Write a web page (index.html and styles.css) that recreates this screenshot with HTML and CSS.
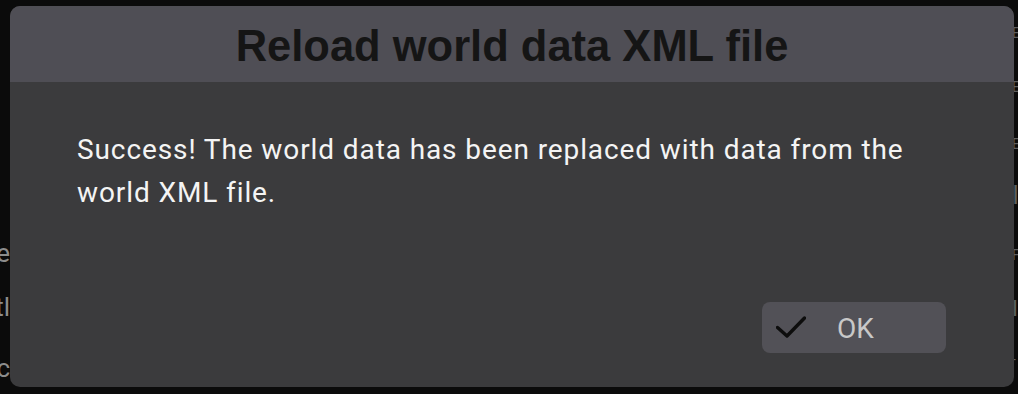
FILE: index.html
```html
<!DOCTYPE html>
<html lang="en">
<head>
<meta charset="utf-8">
<title>Reload world data XML file</title>
<link rel="stylesheet" href="styles.css">
</head>
<body>
<div class="backdrop">
  <div class="bg-line bg-l1">Show the</div>
  <div class="bg-line bg-l2">Settl</div>
  <div class="bg-line bg-l3">Loc</div>
  <div class="bg-right">
    <span class="bg-r bg-r1">E</span>
    <span class="bg-r bg-r2">E</span>
    <span class="bg-r bg-r3">E</span>
    <span class="bg-r bg-r4">I</span>
    <span class="bg-r bg-r5">F</span>
    <span class="bg-r bg-r6">I</span>
    <span class="bg-r bg-r7">-</span>
  </div>
</div>
<div class="dialog">
  <div class="dialog-header">
    <h1 class="dialog-title">Reload world data XML file</h1>
  </div>
  <div class="dialog-body">
    <p class="dialog-message">Success! The world data has been replaced with data from the world XML file.</p>
  </div>
  <div class="dialog-footer">
    <button class="btn-ok" type="button">
      <svg class="btn-icon" width="30" height="22" viewBox="0 0 30 22" aria-hidden="true">
        <path d="M1.5 11.5 L11 20 L28.5 2" fill="none" stroke="#0d0d0d" stroke-width="3.4" stroke-linecap="round" stroke-linejoin="round"/>
      </svg>
      <span class="btn-label">OK</span>
    </button>
  </div>
</div>
</body>
</html>
```

FILE: styles.css
```css
html, body {
  margin: 0;
  padding: 0;
}

body {
  width: 1018px;
  height: 394px;
  background: #0b0b0b;
  overflow: hidden;
  position: relative;
  font-family: Roboto, "Liberation Sans", sans-serif;
}

.backdrop {
  position: absolute;
  inset: 0;
  color: #8c8c8c;
  font-size: 26px;
}

.bg-line {
  position: absolute;
  right: 1008px;
  white-space: nowrap;
}

.bg-l1 { top: 238px; }
.bg-l2 { top: 292px; }
.bg-l3 { top: 353px; }

.bg-r {
  position: absolute;
  left: 1012px;
  color: #5e5e5e;
  font-size: 14px;
  line-height: 14px;
}

.bg-r1 { top: 26px; }
.bg-r2 { top: 80px; }
.bg-r3 { top: 137px; }
.bg-r4 { top: 182px; font-size: 26px; line-height: 26px; }
.bg-r5 { top: 248px; }
.bg-r6 { top: 298px; font-size: 22px; line-height: 22px; }
.bg-r7 { top: 352px; }

.dialog {
  position: absolute;
  left: 10px;
  top: 6px;
  width: 1004px;
  height: 381px;
  border-radius: 10px;
  background: #3b3b3d;
  overflow: hidden;
  display: flex;
  flex-direction: column;
}

.dialog-header {
  height: 76px;
  box-sizing: border-box;
  padding-top: 16px;
  background: #4f4e55;
  flex: none;
}

.dialog-title {
  margin: 0;
  text-align: center;
  font-family: "Liberation Sans", Arial, sans-serif;
  font-weight: bold;
  font-size: 43.5px;
  line-height: 48px;
  color: #151515;
}

.dialog-body {
  flex: 1;
  padding: 46px 67px 0 67px;
}

.dialog-message {
  margin: 0;
  color: #f4f4f4;
  font-size: 28px;
  letter-spacing: 0.9px;
  line-height: 43px;
  max-width: 860px;
}

.dialog-footer {
  display: flex;
  justify-content: flex-end;
  padding: 0 68px 34px 0;
}

.btn-ok {
  width: 184px;
  height: 51px;
  border: none;
  border-radius: 8px;
  background: #525157;
  display: flex;
  align-items: center;
  padding: 2px 0 0 14px;
  box-sizing: border-box;
  font-family: Roboto, "Liberation Sans", sans-serif;
  cursor: pointer;
}

.btn-icon {
  flex: none;
  margin-top: -4px;
}

.btn-label {
  margin-left: 31px;
  color: #c8c8c8;
  font-size: 28px;
  line-height: 32px;
}
```
